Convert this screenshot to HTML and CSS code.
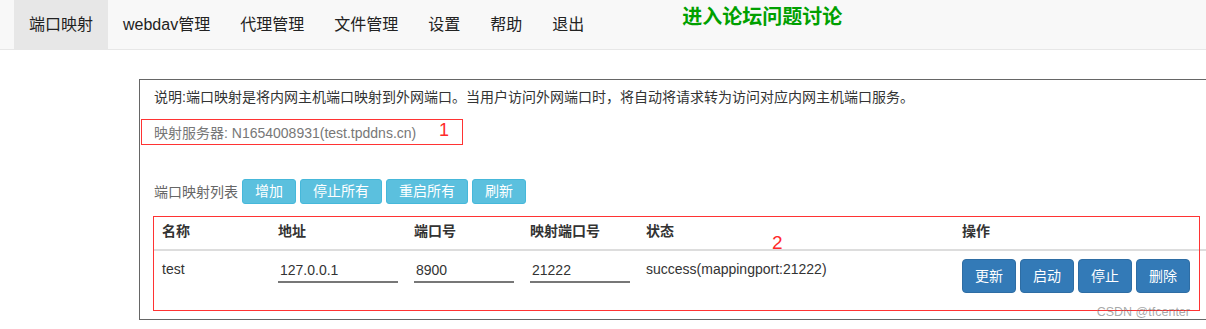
FILE: index.html
```html
<!DOCTYPE html>
<html lang="zh-CN">
<head>
<meta charset="utf-8">
<title>端口映射</title>
<link rel="stylesheet" href="styles.css">
</head>
<body>
<nav class="navbar">
  <ul class="nav">
    <li class="nav-item active"><a class="nav-link" href="#">端口映射</a></li>
    <li class="nav-item"><a class="nav-link" href="#">webdav管理</a></li>
    <li class="nav-item"><a class="nav-link" href="#">代理管理</a></li>
    <li class="nav-item"><a class="nav-link" href="#">文件管理</a></li>
    <li class="nav-item"><a class="nav-link" href="#">设置</a></li>
    <li class="nav-item"><a class="nav-link" href="#">帮助</a></li>
    <li class="nav-item"><a class="nav-link" href="#">退出</a></li>
  </ul>
  <a class="forum" href="#">进入论坛问题讨论</a>
</nav>
<main class="main">
  <section class="panel">
    <p class="info">说明:端口映射是将内网主机端口映射到外网端口。当用户访问外网端口时，将自动将请求转为访问对应内网主机端口服务。</p>
    <p class="server">映射服务器: N1654008931(test.tpddns.cn)</p>
    <div class="toolbar">
      <span class="toolbar-label">端口映射列表</span>
      <button class="btn btn-info">增加</button>
      <button class="btn btn-info">停止所有</button>
      <button class="btn btn-info">重启所有</button>
      <button class="btn btn-info">刷新</button>
    </div>
    <table class="table">
      <colgroup>
        <col class="col-name">
        <col class="col-addr">
        <col class="col-port">
        <col class="col-map">
        <col class="col-state">
        <col>
      </colgroup>
      <thead>
        <tr>
          <th>名称</th>
          <th>地址</th>
          <th>端口号</th>
          <th>映射端口号</th>
          <th>状态</th>
          <th>操作</th>
        </tr>
      </thead>
      <tbody>
        <tr>
          <td>test</td>
          <td><input class="field field-wide" type="text" value="127.0.0.1"></td>
          <td><input class="field" type="text" value="8900"></td>
          <td><input class="field" type="text" value="21222"></td>
          <td>success(mappingport:21222)</td>
          <td>
            <div class="ops">
              <button class="btn btn-primary">更新</button>
              <button class="btn btn-primary">启动</button>
              <button class="btn btn-primary">停止</button>
              <button class="btn btn-primary">删除</button>
            </div>
          </td>
        </tr>
      </tbody>
    </table>
    <div class="mark mark-1"><span class="mark-num mark-num-1">1</span></div>
    <div class="mark mark-2"><span class="mark-num mark-num-2">2</span></div>
  </section>
</main>
<div class="watermark">CSDN @tfcenter</div>
</body>
</html>
```
FILE: styles.css
```css
html, body {
  margin: 0;
  padding: 0;
}

body {
  font-family: "Liberation Sans", "Noto Sans CJK SC", sans-serif;
  font-size: 14px;
  line-height: 20px;
  color: #333;
  background: #fff;
  overflow: hidden;
}

.navbar {
  display: flex;
  align-items: flex-start;
  height: 49px;
  background: #f8f8f8;
  border-bottom: 1px solid #e7e7e7;
}

.nav {
  display: flex;
  list-style: none;
  margin: 0 0 0 14px;
  padding: 0;
}

.nav-link {
  display: block;
  padding: 15px 15px 14px;
  font-size: 16px;
  line-height: 20px;
  color: #222;
  text-decoration: none;
}

.nav-item.active .nav-link {
  background: #e7e7e7;
}

.forum {
  margin: 7px 0 0 83px;
  font-size: 20px;
  line-height: 20px;
  font-weight: bold;
  color: #00a000;
  text-decoration: none;
}

.main {
  padding-top: 29px;
}

.panel {
  position: relative;
  margin-left: 139px;
  border: 1px solid #666;
  border-right: 0;
  padding: 7px 0 18px 14px;
}

.info {
  margin: 0;
  color: #333;
}

.server {
  margin: 16px 0 0;
  color: #777;
}

.toolbar {
  display: flex;
  align-items: center;
  gap: 4px;
  margin-top: 36px;
}

.toolbar-label {
  color: #666;
}

.btn {
  font-family: "Liberation Sans", "Noto Sans CJK SC", sans-serif;
  font-size: 14px;
  color: #fff;
  border: 1px solid transparent;
  border-radius: 4px;
  margin: 0;
  cursor: pointer;
}

.btn-info {
  padding: 3px 12px;
  line-height: 17px;
  border-radius: 3px;
  background: #5bc0de;
  border-color: #46b8da;
}

.btn-primary {
  padding: 6px 12px;
  line-height: 20px;
  background: #337ab7;
  border-color: #2e6da4;
}

.table {
  width: 100%;
  margin-top: 9px;
  border-collapse: collapse;
  table-layout: fixed;
}

.col-name { width: 116px; }
.col-addr { width: 136px; }
.col-port { width: 116px; }
.col-map { width: 116px; }
.col-state { width: 316px; }

.table th,
.table td {
  padding: 8px;
  text-align: left;
  vertical-align: top;
  line-height: 20px;
}

.table th {
  font-weight: bold;
  color: #333;
  border-bottom: 2px solid #ddd;
}

.field {
  display: block;
  width: 100px;
  height: 24px;
  box-sizing: border-box;
  margin: 0;
  padding: 0 2px;
  border: 0;
  border-bottom: 2px solid #777;
  background: transparent;
  font-family: "Liberation Sans", "Noto Sans CJK SC", sans-serif;
  font-size: 14px;
  color: #333;
  outline: none;
}

.field-wide {
  width: 120px;
}

.ops {
  display: flex;
  gap: 4px;
}

.mark {
  position: absolute;
  box-sizing: border-box;
  border: 1px solid #ff3333;
}

.mark-1 {
  left: 1px;
  top: 39px;
  width: 322px;
  height: 26px;
}

.mark-2 {
  left: 13px;
  top: 136px;
  width: 1047px;
  height: 95px;
}

.mark-num {
  position: absolute;
  font-size: 18px;
  line-height: 20px;
  color: #ff2a2a;
}

.mark-num-1 {
  left: 297px;
  top: 0;
}

.mark-num-2 {
  left: 618px;
  top: 16px;
  font-size: 19px;
}

.watermark {
  position: absolute;
  right: 16px;
  top: 305px;
  font-size: 12.5px;
  line-height: 14px;
  color: rgba(110, 110, 110, 0.6);
}
```
